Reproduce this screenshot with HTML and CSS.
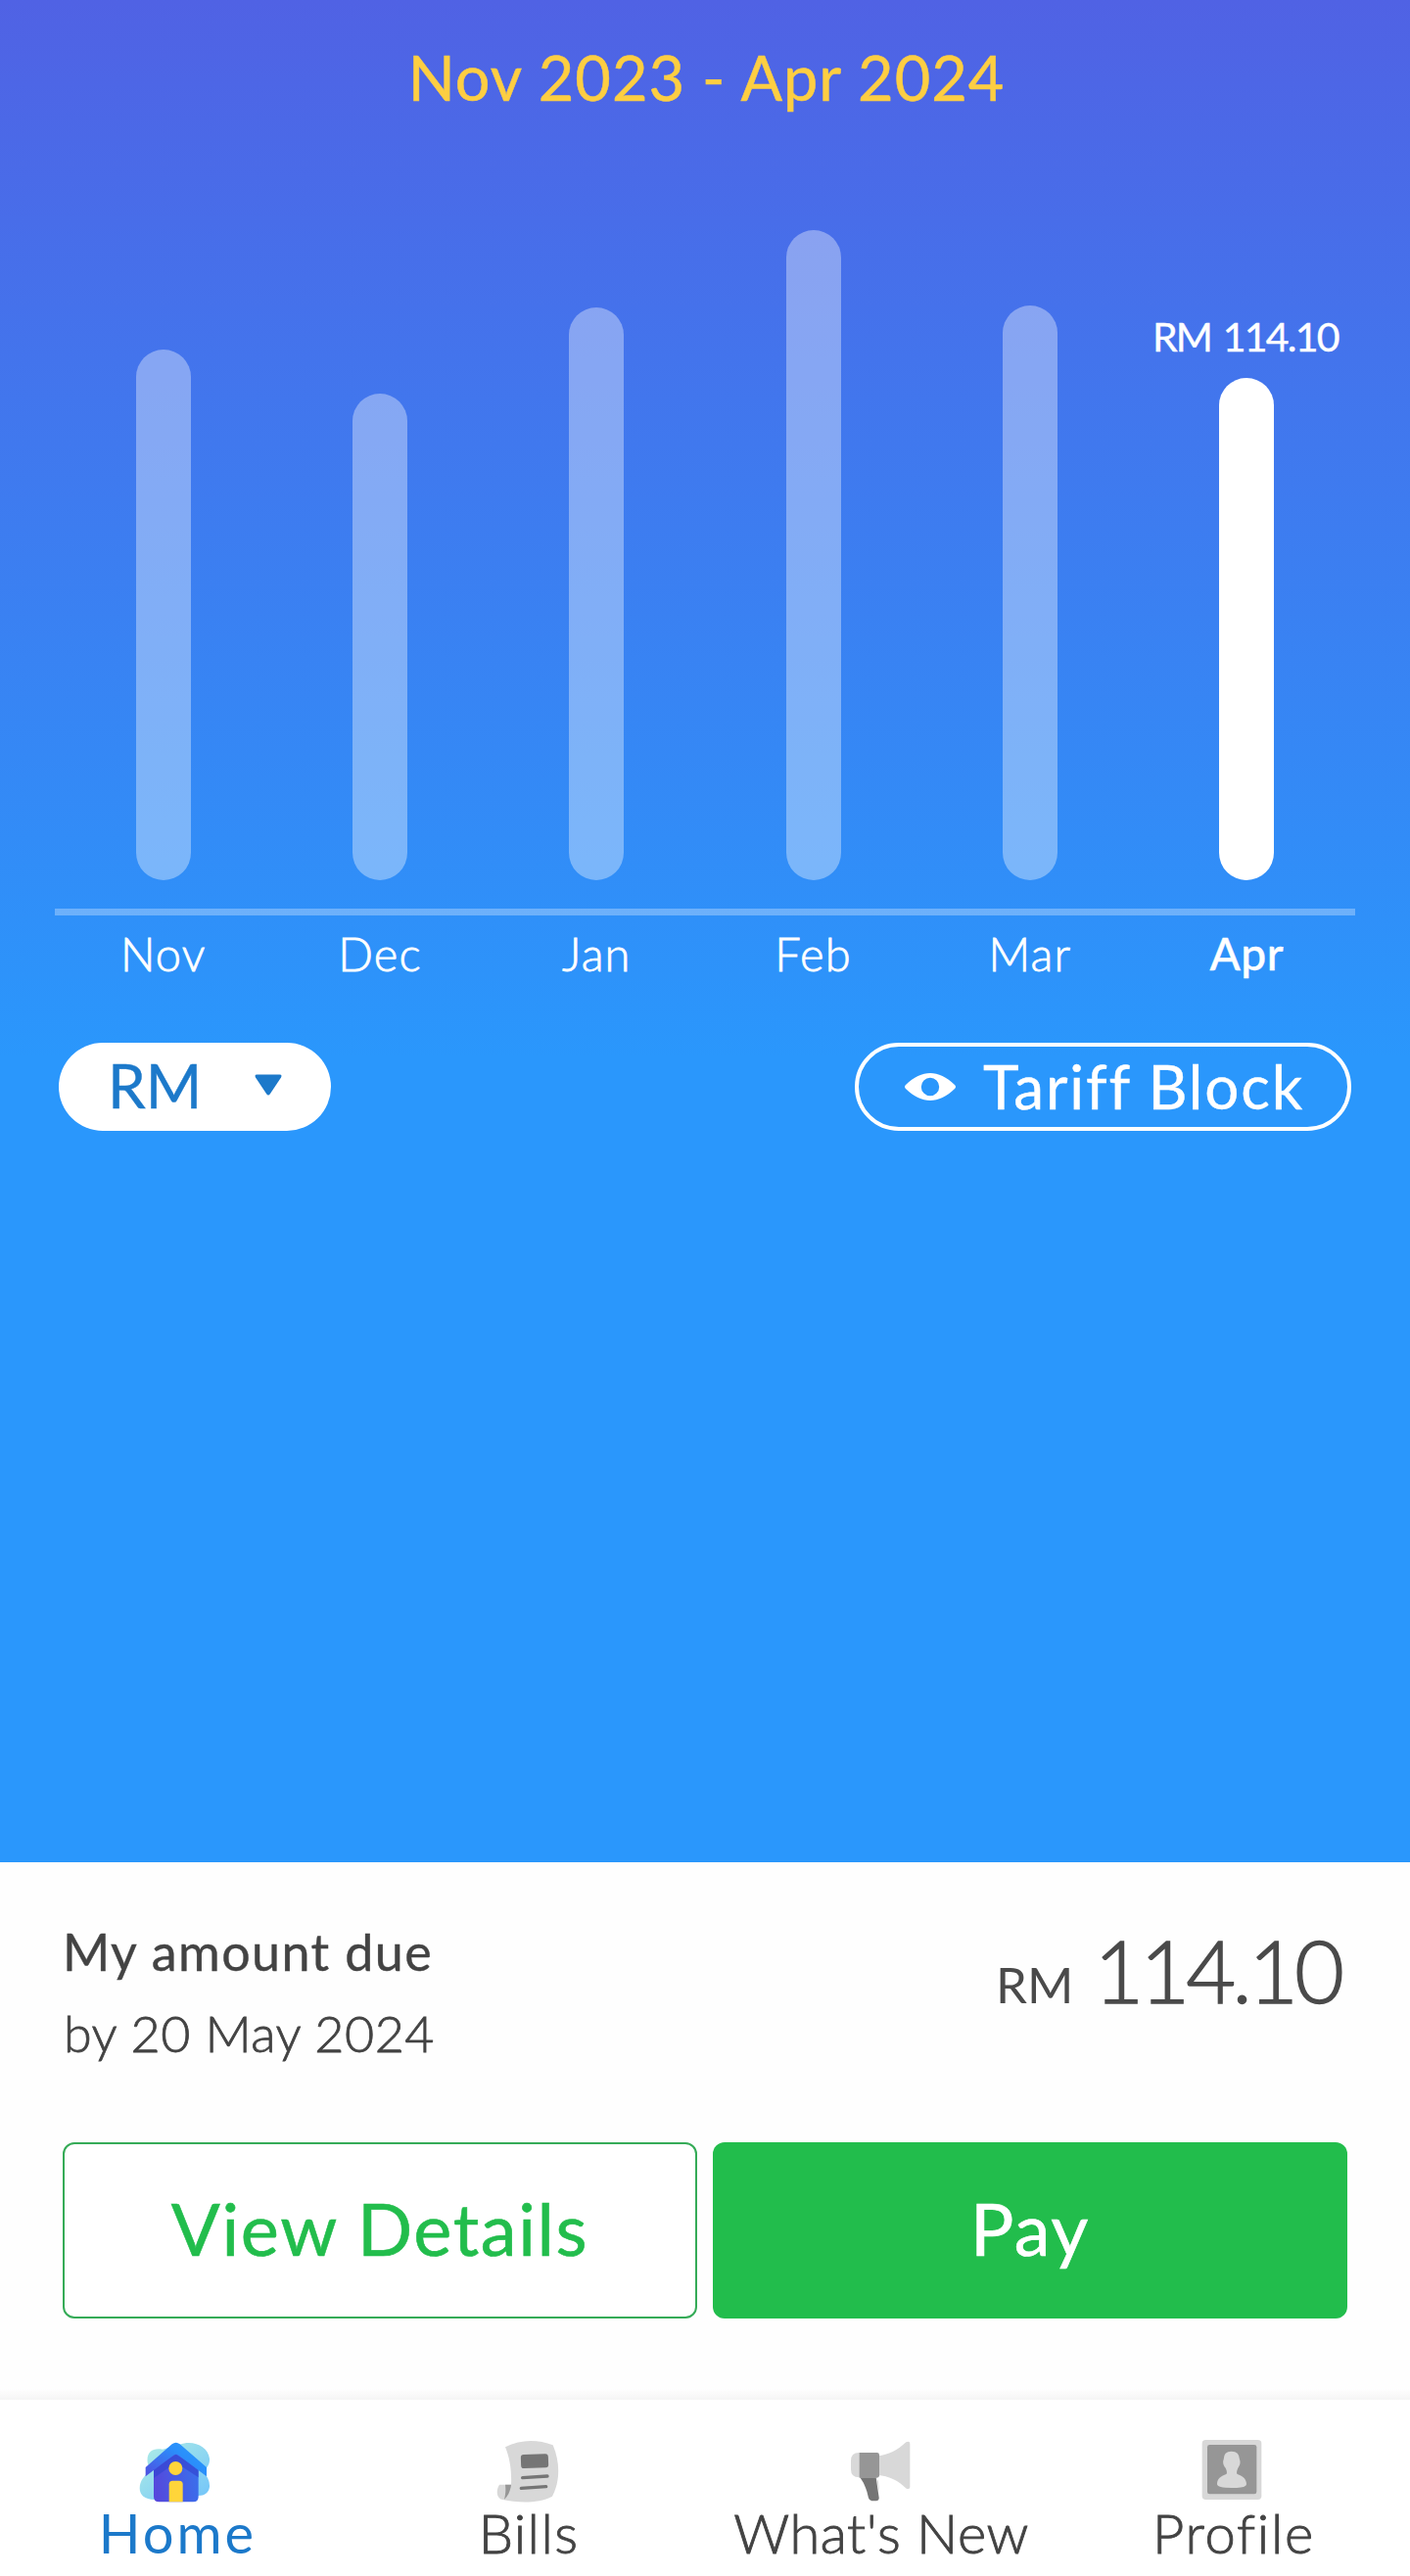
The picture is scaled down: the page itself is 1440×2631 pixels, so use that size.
FILE: index.html
```html
<!DOCTYPE html>
<html lang="en">
  <head>
    <meta charset="UTF-8" />
    <meta name="viewport" content="width=device-width, initial-scale=1.0" />
    <title>Home</title>
    <link rel="stylesheet" href="styles.css">
  </head>
  <body>
    <main class="usage">
      <h1 class="period">Nov 2023 - Apr 2024</h1>

      <div class="chart">
        <div class="column"><div class="bar" style="height: 542px"></div></div>
        <div class="column"><div class="bar" style="height: 497px"></div></div>
        <div class="column"><div class="bar" style="height: 585px"></div></div>
        <div class="column"><div class="bar" style="height: 664px"></div></div>
        <div class="column"><div class="bar" style="height: 587px"></div></div>
        <div class="column active">
          <span class="value">RM 114.10</span>
          <div class="bar" style="height: 513px"></div>
        </div>
      </div>

      <div class="months">
        <span>Nov</span>
        <span>Dec</span>
        <span>Jan</span>
        <span>Feb</span>
        <span>Mar</span>
        <span class="active">Apr</span>
      </div>

      <div class="controls">
        <button class="pill unit">
          RM
          <svg class="caret" viewBox="0 0 28 22">
            <path d="M2.5 0.5h23q3 0 1.5 3L16 20q-2 3-4 0L1 3.5q-1.500-3 1.500-3z" fill="#1c79ca" />
          </svg>
        </button>
        <button class="pill tariff">
          <svg class="eye" viewBox="0 0 52 28">
            <path d="M1 12C9 4 18 0 26 0s17 4 25 12q2 2 0 4c-8 8-17 12-25 12S9 24 1 16q-2-2 0-4zM26 4.800a9.200 9.200 0 1 0 0 18.400a9.200 9.200 0 1 0 0-18.400z" fill="#fff" fill-rule="evenodd" />
          </svg>
          Tariff Block
        </button>
      </div>
    </main>

    <section class="due">
      <div class="summary">
        <div>
          <div class="due-title">My amount due</div>
          <div class="due-date">by 20 May 2024</div>
        </div>
        <div class="amount"><span class="currency">RM</span><span class="total">114.10</span></div>
      </div>
      <div class="actions">
        <button class="btn outline">View Details</button>
        <button class="btn">Pay</button>
      </div>
    </section>

    <nav class="tabs">
      <a class="tab home" href="#">
        <svg class="icon" viewBox="180 153 240 198">
          <defs>
            <linearGradient id="roof" x1="0" y1="1" x2="1" y2="0.300">
              <stop offset="0" stop-color="#4f4fe0" />
              <stop offset="0.700" stop-color="#2a8ffb" />
              <stop offset="1" stop-color="#2a97fc" />
            </linearGradient>
            <linearGradient id="wall" x1="0" y1="0.600" x2="1" y2="0.400">
              <stop offset="0" stop-color="#5548dc" />
              <stop offset="1" stop-color="#3a70ec" />
            </linearGradient>
            <linearGradient id="cloud" x1="0" y1="0" x2="1" y2="1">
              <stop offset="0" stop-color="#b0eee5" />
              <stop offset="1" stop-color="#72c4fa" />
            </linearGradient>
          </defs>
          <path d="M212 225c-4-34 18-46 46-40l52-15c42-16 88 6 92 43c1 18-7 28-20 40c14 15 21 31 20 46c-2 19-15 28-34 28l-135 12c-30 0-45-14-45-35c1-25 15-39 32-52z" fill="url(#cloud)" />
          <path d="M231 240l68-44 69 44v90q0 16-16 16H247q-16 0-16-16z" fill="url(#wall)" />
          <path d="M231 244l68-44 69 44v27l-69-45-68 47z" fill="#3346d2" opacity="0.700" />
          <path d="M206 240L287 169q12-9 24 0l82 71v28l-86-65q-8-5-16 0l-85 65z" fill="url(#roof)" />
          <circle cx="298" cy="243" r="21" fill="#ffd53a" />
          <path d="M278 346v-54q0-11 11-11h20q11 0 11 11v54z" fill="#ffd53a" />
        </svg>
        <span>Home</span>
      </a>
      <a class="tab" href="#">
        <svg class="icon" viewBox="120 153 240 198">
          <path d="M168 178c48-24 98-24 146-6c23 54 22 111-2 157c-43 22-103 20-152 10c-18-3-22-27-10-46h36c2-42-4-82-18-115z" fill="#d8d8d8" />
          <path d="M168 293h18c-2 18-8 33-21 46c4-17 5-30 3-46z" fill="#969696" />
          <rect x="216" y="200" width="84" height="42" rx="9" transform="rotate(-2 258 221)" fill="#757575" />
          <path d="M221 272l76-5M217 304l76-5" stroke="#757575" stroke-width="10" stroke-linecap="round" />
        </svg>
        <span>Bills</span>
      </a>
      <a class="tab whats-new" href="#">
        <svg class="icon" viewBox="360 153 240 198">
          <path d="M416 195h-4q-25 0-25 25v26q0 25 25 25h4zM470 205c31-3 61-18 86-42q12-5 12 5v132q0 9-11 5c-26-25-55-39-87-41z" fill="#d8d8d8" />
          <path d="M466 271q10 16 6 42z" fill="#d8d8d8" />
          <path d="M415 271h49l9 61q1 10-9 11h-13q-8-1-10-9-7-37-26-63z" fill="#757575" />
          <path d="M413 195h54q7 0 7 7v63q0 7-7 7h-54z" fill="#969696" />
        </svg>
        <span>What's New</span>
      </a>
      <a class="tab profile" href="#">
        <svg class="icon" viewBox="210 153 240 198">
          <rect x="233" y="156" width="182" height="183" rx="11" fill="#d8d8d8" />
          <rect x="249" y="171" width="151" height="151" rx="7" fill="#969696" />
          <path d="M299 216q0-25 24-25t25 25c4 10 0 19-5 26q-8 17 0 20c14 5 26 13 26 30q0 11-45 11t-45-11c0-17 12-25 26-30q8-3 0-20c-6-7-10-16-6-26z" fill="#d8d8d8" />
        </svg>
        <span>Profile</span>
      </a>
    </nav>
  </body>
</html>
```
FILE: styles.css
```css
* {
  box-sizing: border-box;
}

body {
  margin: 0;
  min-height: 2631px;
  display: flex;
  flex-direction: column;
  background: #fefefe;
  color: #434343;
  font-family: Lato, "Open Sans", sans-serif;
}

button {
  margin: 0;
  padding: 0;
  border: 0;
  font-family: inherit;
}

.usage {
  height: 1902px;
  padding-top: 41px;
  background: linear-gradient(#5062e4, #2a97fc 1080px) #2a97fc;
  color: #fff;
}

.period {
  margin: 0;
  padding-left: 3px;
  font-size: 63px;
  font-weight: 400;
  line-height: 76px;
  letter-spacing: 1px;
  text-align: center;
  color: #fdce42;
  -webkit-text-stroke: 0.5px;
}

.chart {
  display: flex;
  height: 818px;
  margin: 0 56px;
  padding-bottom: 29px;
  border-bottom: 7px solid rgba(255, 255, 255, 0.3);
}

.column {
  flex: 1;
  display: flex;
  flex-direction: column;
  align-items: center;
  justify-content: flex-end;
}

.bar {
  width: 56px;
  border-radius: 28px;
  background: rgba(255, 255, 255, 0.36);
}

.active .bar {
  background: #fff;
}

.value {
  margin: 0 3px 18px 0;
  font-size: 41px;
  line-height: 48px;
  letter-spacing: -1.8px;
  word-spacing: 3px;
  white-space: nowrap;
  -webkit-text-stroke: 0.4px;
}

.months {
  display: flex;
  margin: 11px 56px 0;
  font-size: 47px;
  font-weight: 300;
  line-height: 56px;
  letter-spacing: 1.2px;
  text-align: center;
  -webkit-text-stroke: 0.8px;
}

.months span {
  flex: 1;
}

.months .active {
  font-size: 46px;
  font-weight: 500;
  letter-spacing: 0.5px;
  -webkit-text-stroke: 0.4px;
}

.controls {
  display: flex;
  justify-content: space-between;
  margin: 63px 60px 0;
}

.pill {
  display: flex;
  align-items: center;
  height: 90px;
  border-radius: 45px;
  font-size: 62px;
  line-height: 78px;
  -webkit-text-stroke: 0.4px;
}

.unit {
  width: 278px;
  padding: 0 50px 4px 50px;
  justify-content: space-between;
  background: #fff;
  color: #1c79ca;
}

.caret {
  width: 28px;
  height: 22px;
}

.tariff {
  width: 507px;
  padding: 0 0 3px 47px;
  gap: 28px;
  border: 4px solid #fff;
  background: none;
  color: #fff;
  letter-spacing: 1.8px;
  white-space: nowrap;
}

.eye {
  flex: none;
  width: 52px;
  height: 28px;
  margin-top: 3px;
}

.due {
  height: 549px;
  padding: 50px 64px 0;
  background: linear-gradient(to top, #f5f5f5, #fefefe 11px);
}

.summary {
  display: flex;
  justify-content: space-between;
  height: 166px;
  font-size: 52px;
  line-height: 83px;
}

.due-title {
  letter-spacing: 1.4px;
  -webkit-text-stroke: 0.4px;
}

.due-date {
  padding-left: 1px;
  font-weight: 300;
  letter-spacing: 0.5px;
  -webkit-text-stroke: 0.8px;
}

.amount {
  display: flex;
  align-items: baseline;
  gap: 21px;
  margin: 19px 7px 0 0;
  color: #4a4a4a;
}

.currency {
  font-size: 51px;
}

.total {
  font-size: 88px;
  font-weight: 300;
  letter-spacing: -4px;
  -webkit-text-stroke: 1.4px;
}

.actions {
  display: grid;
  grid-template-columns: 1fr 1fr;
  gap: 16px;
  margin-top: 70px;
}

.btn {
  height: 180px;
  padding-bottom: 6px;
  border-radius: 12px;
  background: #22bd4c;
  color: #fff;
  font-size: 74px;
  letter-spacing: 1.6px;
  -webkit-text-stroke: 0.6px;
}

.outline {
  border: 2px solid #35ab57;
  background: #fff;
  color: #22bd4c;
}

.tabs {
  display: flex;
  flex: 1;
  padding-top: 40px;
  background: #fff;
}

.tab {
  flex: 1 1 0;
  display: flex;
  flex-direction: column;
  align-items: center;
  color: #434343;
  font-size: 56px;
  font-weight: 300;
  line-height: 60px;
  letter-spacing: 1.4px;
  text-decoration: none;
  -webkit-text-stroke: 0.9px;
}

.icon {
  width: 80px;
  height: 66px;
}

.home {
  color: #1c79ca;
  font-weight: 400;
  letter-spacing: 3px;
  -webkit-text-stroke: 0;
}

.home span {
  padding-left: 3px;
}

.whats-new {
  letter-spacing: 0.5px;
}

.profile {
  letter-spacing: 1.7px;
}
```
